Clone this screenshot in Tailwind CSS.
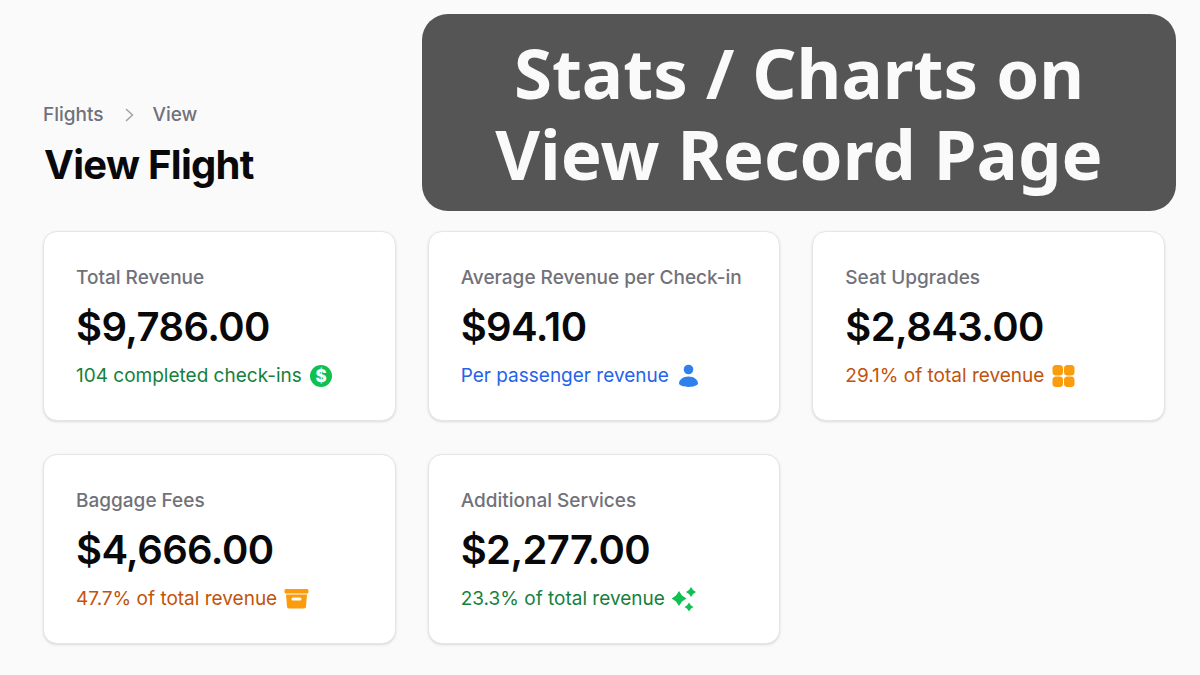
<!DOCTYPE html>
<html lang="en">
    <head>
        <meta charset="UTF-8">
        <meta name="viewport" content="width=device-width, initial-scale=1.0">
        <title>View Flight</title>
        <script src="https://cdn.jsdelivr.net/npm/@tailwindcss/browser@4"></script>
    </head>
    <body class="bg-[#fafafa] font-[Inter,sans-serif] w-[1200px] h-[675px] overflow-hidden relative">
        <!-- Banner over the page -->
        <div class="absolute left-[422px] top-[14px] w-[754px] h-[197px] rounded-[26px] bg-[#555555] flex flex-col items-center justify-center text-[#fafafa] font-['Noto_Sans',sans-serif] font-bold text-[69px] leading-[81px]">
            <div>Stats / Charts on</div>
            <div>View Record Page</div>
        </div>

        <div class="pl-[43px] pr-[35px] pt-[103px]">
            <nav class="flex items-center text-[19px] leading-[24px] text-[#71717a] font-medium">
                <span>Flights</span>
                <svg class="w-5 h-5 ml-[16px] mr-[13px] text-[#a1a1aa]" viewBox="0 0 20 20" fill="none" stroke="currentColor" stroke-width="1.6" stroke-linecap="round" stroke-linejoin="round"><path d="M6.5 4.5l6 5.5-6 5.5"/></svg>
                <span>View</span>
            </nav>
            <h1 class="mt-[15px] ml-px text-[40px] leading-[45px] font-bold tracking-[-0.7px] text-[#09090b]">View Flight</h1>

            <div class="mt-[44px] grid grid-cols-3 gap-x-[32px] gap-y-[33px]">
                <div class="h-[190px] bg-white rounded-[14px] border border-[#e5e5e7] shadow-sm px-[32px] pt-[32px]">
                    <div class="text-[19px] leading-[28px] font-medium text-[#71717a]">Total Revenue</div>
                    <div class="mt-[11px] text-[40px] leading-[48px] font-semibold tracking-[-0.6px] text-[#09090b]">$9,786.00</div>
                    <div class="mt-[11px] flex items-center gap-[7px] text-[19px] leading-[28px] text-[#16803d]">
                        <span>104 completed check-ins</span>
                        <svg class="w-[24px] h-[24px]" viewBox="0 0 24 24"><circle cx="12" cy="12" r="11" fill="#10c050"/><text x="12" y="18" text-anchor="middle" font-family="Inter, sans-serif" font-size="17" font-weight="800" fill="#fff">$</text></svg>
                    </div>
                </div>
                <div class="h-[190px] bg-white rounded-[14px] border border-[#e5e5e7] shadow-sm px-[32px] pt-[32px]">
                    <div class="text-[19px] leading-[28px] font-medium text-[#71717a]">Average Revenue per Check-in</div>
                    <div class="mt-[11px] text-[40px] leading-[48px] font-semibold tracking-[-0.6px] text-[#09090b]">$94.10</div>
                    <div class="mt-[11px] flex items-center gap-[8px] text-[19px] leading-[28px] text-[#2563eb]">
                        <span>Per passenger revenue</span>
                        <svg class="w-[24px] h-[24px]" viewBox="0 0 24 24" fill="#2f80ed"><circle cx="11.500" cy="5.500" r="4.800"/><path d="M11.500 12.500c-5.200 0-9.200 2.800-9.500 6.800-.1 1.900 4.200 3.700 9.500 3.700s9.600-1.800 9.500-3.700c-.3-4-4.300-6.800-9.500-6.800z"/></svg>
                    </div>
                </div>
                <div class="h-[190px] bg-white rounded-[14px] border border-[#e5e5e7] shadow-sm px-[32px] pt-[32px]">
                    <div class="text-[19px] leading-[28px] font-medium text-[#71717a]">Seat Upgrades</div>
                    <div class="mt-[11px] text-[40px] leading-[48px] font-semibold tracking-[-0.6px] text-[#09090b]">$2,843.00</div>
                    <div class="mt-[11px] flex items-center gap-[8px] text-[19px] leading-[28px] text-[#c2530a]">
                        <span>29.1% of total revenue</span>
                        <svg class="w-[24px] h-[24px]" viewBox="0 0 24 24" fill="#fb9c0c"><rect x="0.500" y="1" width="10.500" height="10.500" rx="3.500"/><rect x="12" y="1" width="10.500" height="10.500" rx="3.500"/><rect x="0.500" y="12.500" width="10.500" height="10.500" rx="3.500"/><rect x="12" y="12.500" width="10.500" height="10.500" rx="3.500"/></svg>
                    </div>
                </div>
                <div class="h-[190px] bg-white rounded-[14px] border border-[#e5e5e7] shadow-sm px-[32px] pt-[32px]">
                    <div class="text-[19px] leading-[28px] font-medium text-[#71717a]">Baggage Fees</div>
                    <div class="mt-[11px] text-[40px] leading-[48px] font-semibold tracking-[-0.6px] text-[#09090b]">$4,666.00</div>
                    <div class="mt-[11px] flex items-center gap-[7px] text-[19px] leading-[28px] text-[#c2530a]">
                        <span>47.7% of total revenue</span>
                        <svg class="w-[25px] h-[24px]" viewBox="0 0 24 24" fill="#fb9c0c"><rect x="0" y="2" width="24" height="4.500" rx="1.500"/><path fill-rule="evenodd" d="M1.500 7.500h21l-1 12a2 2 0 0 1-2 2H4.500a2 2 0 0 1-2-2zM8.500 10.500a1 1 0 0 0 0 3h7a1 1 0 0 0 0-3z"/></svg>
                    </div>
                </div>
                <div class="h-[190px] bg-white rounded-[14px] border border-[#e5e5e7] shadow-sm px-[32px] pt-[32px]">
                    <div class="text-[19px] leading-[28px] font-medium text-[#71717a]">Additional Services</div>
                    <div class="mt-[11px] text-[40px] leading-[48px] font-semibold tracking-[-0.6px] text-[#09090b]">$2,277.00</div>
                    <div class="mt-[11px] flex items-center gap-[7px] text-[19px] leading-[28px] text-[#16803d]">
                        <span>23.3% of total revenue</span>
                        <svg class="w-[24px] h-[24px]" viewBox="0 0 24 24" fill="#10c050"><path d="M7 4l3 4.500 4.500 3-4.500 3-3 4.500-3-4.500-4.500-3 4.500-3z"/><path d="M19 0l2 3 3 2-3 2-2 3-2-3-3-2 3-2z"/><path d="M17 15.500l1.800 2.700 2.700 1.800-2.700 1.800L17 24.500l-1.800-2.700-2.700-1.800 2.700-1.800z"/></svg>
                    </div>
                </div>
            </div>
        </div>
    </body>
</html>
